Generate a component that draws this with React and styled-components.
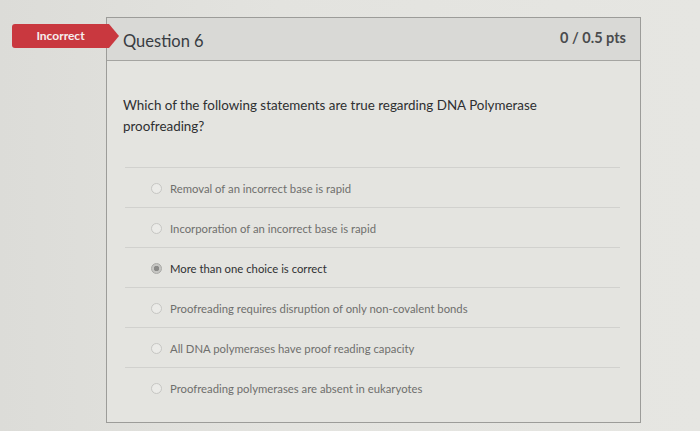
import React from 'react';
import styled, { createGlobalStyle } from 'styled-components';

const answers = [
  { text: 'Removal of an incorrect base is rapid' },
  { text: 'Incorporation of an incorrect base is rapid' },
  { text: 'More than one choice is correct', selected: true },
  { text: 'Proofreading requires disruption of only non-covalent bonds' },
  { text: 'All DNA polymerases have proof reading capacity' },
  { text: 'Proofreading polymerases are absent in eukaryotes' },
];

const App = () => {
  return (
    <>
      <GlobalStyle />
      <Page>
        <QuestionCard>
          <ResultBadge>Incorrect</ResultBadge>
          <Header>
            <Title>Question 6</Title>
            <Points>0 / 0.5 pts</Points>
          </Header>
          <Body>
            <QuestionText>
              Which of the following statements are true regarding DNA Polymerase proofreading?
            </QuestionText>
            <AnswerList>
              {answers.map((a) => (
                <AnswerRow key={a.text}>
                  <Radio selected={a.selected} />
                  <AnswerText selected={a.selected}>{a.text}</AnswerText>
                </AnswerRow>
              ))}
            </AnswerList>
          </Body>
        </QuestionCard>
      </Page>
    </>
  );
};

export default App;

const GlobalStyle = createGlobalStyle`
  html, body {
    margin: 0;
    padding: 0;
    background: #e1e1dd;
  }
  body {
    font-family: Lato, "Open Sans", sans-serif;
  }
`;

const Page = styled.div`
  width: 700px;
  height: 431px;
  padding: 17px 0 0 106px;
  box-sizing: border-box;
  overflow: hidden;
  background: linear-gradient(90deg, #dcdcd8 0%, #e3e3df 40%, #e6e6e2 100%);
`;

const QuestionCard = styled.div`
  position: relative;
  width: 535px;
  height: 406px;
  box-sizing: border-box;
  border: 1px solid #9c9c99;
  background: #e4e4e0;
  display: flex;
  flex-direction: column;
`;

const ResultBadge = styled.div`
  position: absolute;
  left: -95px;
  top: 6px;
  width: 107px;
  height: 24px;
  box-sizing: border-box;
  padding: 0 10px 1px 0;
  display: flex;
  align-items: center;
  justify-content: center;
  background: #c9383f;
  color: #f6eeee;
  font-size: 12px;
  font-weight: 700;
  border-radius: 3px 0 0 3px;
  clip-path: polygon(0 0, 97px 0, 100% 50%, 97px 100%, 0 100%);
`;

const Header = styled.div`
  height: 43px;
  flex: none;
  box-sizing: border-box;
  border-bottom: 1px solid #a4a4a1;
  background: #d9d9d6;
  display: flex;
  align-items: center;
  justify-content: space-between;
  padding: 2px 14px 0 16px;
`;

const Title = styled.div`
  font-size: 16.5px;
  color: #383c42;
  margin-top: 2px;
`;

const Points = styled.div`
  font-size: 14.5px;
  font-weight: 700;
  color: #4a4b4d;
  margin-top: -5px;
`;

const Body = styled.div`
  flex: 1;
  padding: 34px 20px 0 18px;
`;

const QuestionText = styled.div`
  max-width: 430px;
  margin-left: -2px;
  font-size: 13.4px;
  line-height: 21px;
  color: #2e2f31;
`;

const AnswerList = styled.div`
  margin-top: 30px;
  display: flex;
  flex-direction: column;
`;

const AnswerRow = styled.div`
  height: 40px;
  box-sizing: border-box;
  border-top: 1px solid #d1d1ce;
  display: flex;
  align-items: center;
  gap: 8px;
  padding: 2px 0 0 26px;
`;

const Radio = styled.span`
  width: 11px;
  height: 11px;
  flex: none;
  border-radius: 50%;
  box-sizing: border-box;
  border: 1px solid ${(p) => (p.selected ? '#a9a9a6' : '#c6c6c3')};
  background: ${(p) =>
    p.selected
      ? 'radial-gradient(circle, #8a8a88 0 2.5px, #c6c6c3 3px)'
      : '#ebebe8'};
`;

const AnswerText = styled.span`
  font-size: 11.3px;
  color: ${(p) => (p.selected ? '#303133' : '#6f6f6d')};
`;
